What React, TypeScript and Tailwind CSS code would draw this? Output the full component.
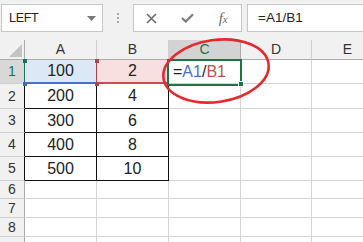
import React from 'react';

const COLS = ['A', 'B', 'C', 'D', 'E'];
const ROW_H = ['h-[24px]', 'h-[25px]', 'h-[24px]', 'h-[24px]', 'h-[24px]', 'h-[18px]', 'h-[19px]', 'h-[19px]', 'h-[19px]'];
const DATA: Record<number, [string, string]> = {
  1: ['100', '2'],
  2: ['200', '4'],
  3: ['300', '6'],
  4: ['400', '8'],
  5: ['500', '10'],
};

const colWidth = (i: number) => (i === 3 ? 'w-[71px]' : 'w-[72px]');

const Toolbar: React.FC = () => (
  <div className="h-[40px] bg-[#f1f1f1] flex items-start pt-[4px] pl-[1px]">
    <div className="w-[102px] h-[28px] bg-white border border-[#c6c6c6] flex items-center justify-between pl-[7px] pr-[6px]">
      <span className="text-[12.5px] text-[#222] tracking-[-0.3px]">LEFT</span>
      <svg width="9" height="5" viewBox="0 0 9 5">
        <path d="M0 0 L9 0 L4.5 5 Z" fill="#7a7a7a" />
      </svg>
    </div>
    <div className="w-[30px] h-[28px] flex flex-col items-center justify-center gap-[2px]">
      <span className="w-[2px] h-[2px] bg-[#a8a8a8]" />
      <span className="w-[2px] h-[2px] bg-[#a8a8a8]" />
      <span className="w-[2px] h-[2px] bg-[#a8a8a8]" />
    </div>
    <div className="w-[109px] h-[28px] bg-white border border-[#c6c6c6] flex items-center">
      <div className="w-[36px] flex justify-center">
        <svg width="11" height="11" viewBox="0 0 11 11">
          <path d="M1 1 L10 10 M10 1 L1 10" stroke="#6b6b6b" strokeWidth="1.6" />
        </svg>
      </div>
      <div className="w-[36px] flex justify-center">
        <svg width="13" height="10" viewBox="0 0 13 10">
          <path d="M1 5 L4.8 8.6 L12 1.2" stroke="#7d7d7d" strokeWidth="2.2" fill="none" />
        </svg>
      </div>
      <div className="w-[36px] flex justify-center items-baseline font-['Liberation_Serif'] italic text-[#6b6b6b]">
        <span className="text-[15px] leading-none">f</span>
        <span className="text-[11px] leading-none">x</span>
      </div>
    </div>
    <div className="ml-[5px] flex-1 h-[28px] bg-white border border-[#c6c6c6] border-r-0 flex items-center pl-[10px]">
      <span className="text-[13.5px] text-[#222]">=A1/B1</span>
    </div>
  </div>
);

const HeaderRow: React.FC = () => (
  <div className="flex h-[20px]">
    <div className="w-[25px] shrink-0 bg-[#f1f1f1] border-r border-b border-[#ababab] flex items-end justify-end pr-[2px] pb-[2px]">
      <svg width="13" height="13" viewBox="0 0 13 13">
        <path d="M13 0 L13 13 L0 13 Z" fill="#c4c4c4" />
      </svg>
    </div>
    {COLS.map((c, i) => (
      <div
        key={c}
        className={`${colWidth(i)} shrink-0 border-b border-r flex items-center justify-center text-[14px] ${
          c === 'C'
            ? 'bg-[#d3d3d3] text-[#217346] border-r-[#ababab] border-b-[#217346]'
            : 'bg-[#f1f1f1] text-[#333] border-r-[#d0d0d0] border-b-[#ababab]'
        }`}
      >
        {c}
      </div>
    ))}
  </div>
);

const cellClass = (row: number, col: number): string => {
  if (row === 1 && col === 0) return 'bg-[#dde8f6] border-r-[#b0454a] border-b-[#4472c4] border-b-2';
  if (row === 1 && col === 1) return 'bg-[#f8e0e0] border-r-[#217346] border-b-[#c0504d] border-b-2';
  if (row >= 2 && row <= 5 && col <= 1) return 'border-[#111]';
  return 'border-[#d4d4d4]';
};

const Row: React.FC<{ row: number }> = ({ row }) => {
  const data = DATA[row];
  const rowHeaderBorder =
    row === 1 ? 'border-r-[#1f6f5c]' : row <= 5 ? 'border-r-[#111]' : 'border-r-[#ababab]';
  return (
    <div className={`flex ${ROW_H[row - 1]}`}>
      <div
        className={`w-[25px] shrink-0 border-r border-b border-b-[#d0d0d0] ${rowHeaderBorder} flex items-center justify-center text-[14px] ${
          row === 1 ? 'bg-[#d8d8d8] text-[#217346]' : 'bg-[#f1f1f1] text-[#333]'
        }`}
      >
        {row < 9 ? row : null}
      </div>
      {COLS.map((c, i) => (
        <div
          key={c}
          className={`${colWidth(i)} shrink-0 border-r border-b flex items-center text-[16px] text-[#222] ${cellClass(row, i)} ${
            i === 2 ? 'justify-start pl-[4px]' : 'justify-center'
          }`}
        >
          {data && i < 2 ? data[i] : null}
          {row === 1 && i === 2 ? (
            <span>
              =<span className="text-[#4472c4]">A1</span>/<span className="text-[#c0504d]">B1</span>
            </span>
          ) : null}
        </div>
      ))}
    </div>
  );
};

const App: React.FC = () => (
  <div className="relative w-[363px] h-[242px] overflow-hidden bg-white font-['Liberation_Sans',sans-serif]">
    <Toolbar />
    <HeaderRow />
    {[1, 2, 3, 4, 5, 6, 7, 8, 9].map((r) => (
      <Row key={r} row={r} />
    ))}

    {/* active cell C1 */}
    <div className="absolute left-[167px] top-[59px] w-[75px] h-[27px] border-2 border-[#217346]" />
    <div className="absolute left-[238px] top-[81px] w-[6px] h-[6px] bg-[#217346] border border-white" />

    {/* reference handles */}
    <div className="absolute left-[23px] top-[59px] w-[4px] h-[4px] bg-[#1f6f5c]" />
    <div className="absolute left-[23px] top-[82px] w-[4px] h-[4px] bg-[#3d6bb5]" />
    <div className="absolute left-[95px] top-[59px] w-[4px] h-[4px] bg-[#b0454a]" />
    <div className="absolute left-[95px] top-[82px] w-[4px] h-[4px] bg-[#b0454a]" />

    {/* hand drawn circle */}
    <svg className="absolute left-0 top-0 pointer-events-none" width="363" height="242" viewBox="0 0 363 242">
      <ellipse
        cx="216"
        cy="71"
        rx="53"
        ry="31"
        transform="rotate(-8 216 71)"
        fill="none"
        stroke="#e52a2f"
        strokeWidth="2.6"
      />
    </svg>
  </div>
);

export default App;
